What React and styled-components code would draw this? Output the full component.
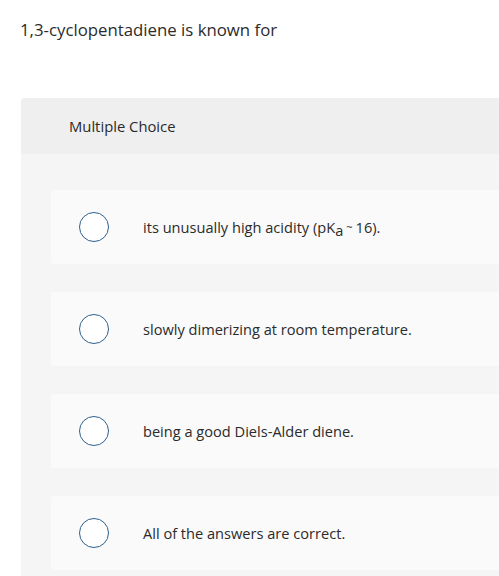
import React from "react";
import styled, { createGlobalStyle } from "styled-components";

const Global = createGlobalStyle`
  html, body { margin: 0; padding: 0; background: #ffffff; }
  body { font-family: "Open Sans", "Liberation Sans", sans-serif; color: #2b2b2b; overflow: hidden; }
`;

const Page = styled.div`
  width: 499px;
  height: 576px;
  overflow: hidden;
`;

const Question = styled.p`
  margin: 0;
  padding: 19px 0 0 20px;
  font-size: 16.8px;
  line-height: 22px;
  color: #2b2b2b;
`;

const Panel = styled.section`
  margin: 57px -40px 0 21px;
  border-radius: 4px 0 0 0;
  overflow: hidden;
`;

const Header = styled.div`
  height: 56px;
  display: flex;
  align-items: center;
  padding-left: 48px;
  background: #efefef;
  font-size: 14.8px;
  color: #2b2b2b;
`;

const Body = styled.div`
  background: #f5f5f5;
  padding: 36px 0 20px 30px;
  display: flex;
  flex-direction: column;
  gap: 28px;
`;

const Option = styled.label`
  height: 74px;
  display: flex;
  align-items: center;
  background: #fafafa;
  border-radius: 3px;
  padding-left: 28px;
  gap: 34px;
  font-size: 14.6px;
  color: #2b2b2b;
`;

const Radio = styled.span`
  flex: none;
  width: 28px;
  height: 28px;
  border: 1.5px solid #2f5f8d;
  border-radius: 50%;
  background: #ffffff;
`;

const Sub = styled.sub`
  font-size: 14.6px;
  vertical-align: -3px;
  line-height: 0;
`;

const Tilde = styled.span`
  font-size: 11px;
  margin: 0 3px 0 3px;
  vertical-align: 2px;
`;

const options = [
  <>its unusually high acidity (pK<Sub>a</Sub><Tilde>~</Tilde>16).</>,
  "slowly dimerizing at room temperature.",
  "being a good Diels-Alder diene.",
  "All of the answers are correct.",
];

export default function App() {
  return (
    <Page>
      <Global />
      <Question>1,3-cyclopentadiene is known for</Question>
      <Panel>
        <Header>Multiple Choice</Header>
        <Body>
          {options.map((o, i) => (
            <Option key={i}>
              <Radio />
              <span>{o}</span>
            </Option>
          ))}
        </Body>
      </Panel>
    </Page>
  );
}
